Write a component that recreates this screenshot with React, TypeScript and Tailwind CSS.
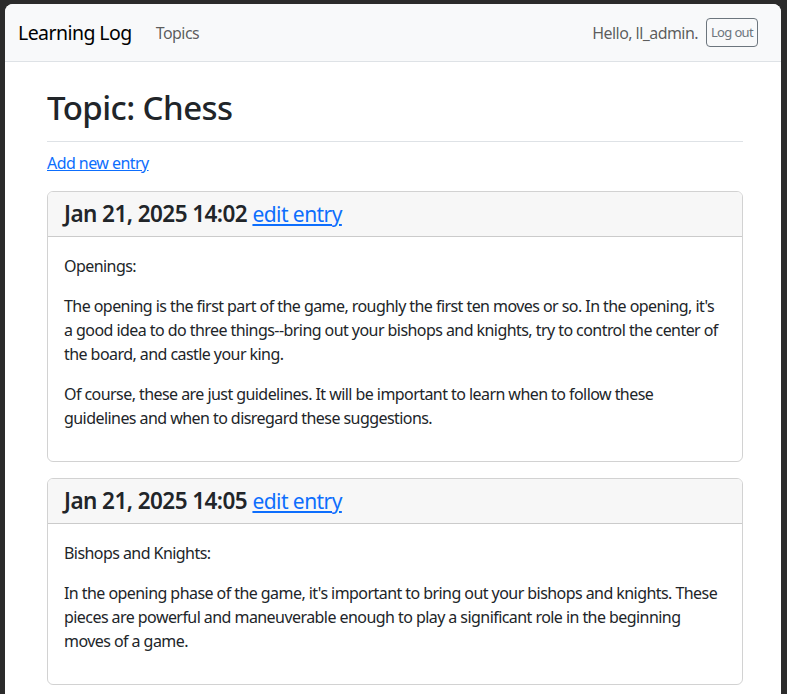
export default function App() {
  const font = "font-['Segoe_UI','Noto_Sans',sans-serif] tracking-[-0.035em]";
  return (
    <div className={`h-[694px] overflow-hidden bg-[#2b2b2b] pt-1 pl-[5px] pr-[6px] ${font}`}>
      <div className="h-full overflow-hidden rounded-t-lg bg-white text-[#212529]">
        {/* Navbar */}
        <nav className="flex h-[58px] items-center justify-between border-b border-[#dee2e6] bg-[#f8f9fa] pl-[13px] pr-[23px]">
          <div className="flex items-center">
            <span className="text-[19.5px] text-black">Learning Log</span>
            <span className="ml-[24px] text-[16px] text-black/65">Topics</span>
          </div>
          <div className="flex items-center gap-2">
            <span className="text-[16px] text-black/65">Hello, ll_admin.</span>
            <button className="flex h-[29px] w-[52px] items-center justify-center rounded border border-[#6c757d] text-[13px] tracking-[-0.05em] text-[#6c757d]">
              Log out
            </button>
          </div>
        </nav>

        {/* Content */}
        <main className="w-[738px] pl-[42px]">
          <h1 className="mt-[26px] border-b border-[#dee2e6] pb-[13px] text-[33px] leading-[1.2] font-medium">
            Topic: Chess
          </h1>
          <p className="mt-[9px] mb-4">
            <a href="#" className="text-[16px] text-[#0d6efd] underline">Add new entry</a>
          </p>

          <EntryCard
            date="Jan 21, 2025 14:02"
            paragraphs={[
              "Openings:",
              "The opening is the first part of the game, roughly the first ten moves or so. In the opening, it's a good idea to do three things--bring out your bishops and knights, try to control the center of the board, and castle your king.",
              "Of course, these are just guidelines. It will be important to learn when to follow these guidelines and when to disregard these suggestions.",
            ]}
          />
          <EntryCard
            date="Jan 21, 2025 14:05"
            paragraphs={[
              "Bishops and Knights:",
              "In the opening phase of the game, it's important to bring out your bishops and knights. These pieces are powerful and maneuverable enough to play a significant role in the beginning moves of a game.",
            ]}
          />
        </main>
      </div>
    </div>
  );
}

function EntryCard({ date, paragraphs }: { date: string; paragraphs: string[] }) {
  return (
    <div className="mb-4 overflow-hidden rounded-md border border-black/[0.175]">
      <div className="flex h-[45px] items-center border-b border-black/[0.175] bg-[#f7f7f7] px-4">
        <h3 className="text-[22.5px] font-semibold">
          {date}{" "}
          <a href="#" className="text-[21px] font-normal text-[#0d6efd] underline">edit entry</a>
        </h3>
      </div>
      <div className="px-4 pt-[17px] pb-[15px]">
        {paragraphs.map((p, i) => (
          <p key={i} className="mb-4 text-[16px] leading-6">{p}</p>
        ))}
      </div>
    </div>
  );
}
